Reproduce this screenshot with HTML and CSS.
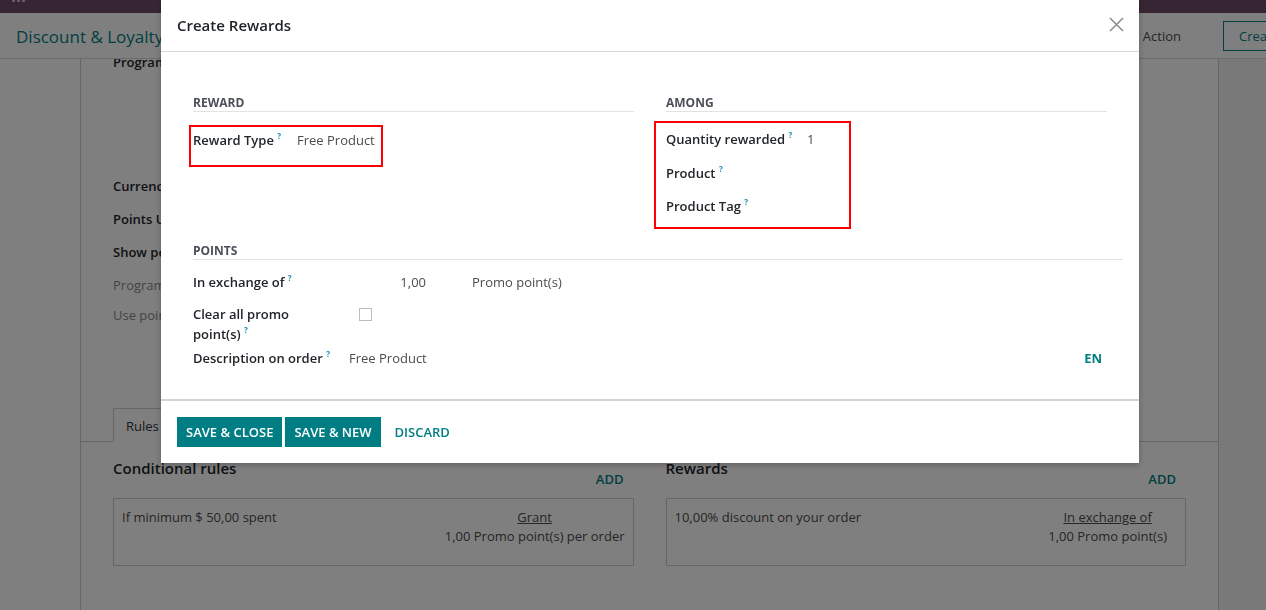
FILE: index.html
```html
<!DOCTYPE html>
<html lang="en">
<head>
  <meta charset="UTF-8" />
  <title>Discount &amp; Loyalty - Create Rewards</title>
  <link rel="stylesheet" href="styles.css">
</head>
<body>

  <!-- Page behind the dialog -->
  <div class="navbar">
    <span class="apps-dots"><i></i><i></i><i></i></span>
  </div>

  <div class="control-panel">
    <div class="breadcrumb">Discount &amp; Loyalty</div>
    <div class="cp-right">
      <span class="cp-action">Action</span>
      <button class="btn-create">Create</button>
    </div>
  </div>

  <div class="form-area">
    <div class="sheet">
      <div class="bg-row first strong">Program Name</div>
      <div class="bg-row spaced strong">Currency</div>
      <div class="bg-row strong">Points Unit</div>
      <div class="bg-row strong">Show points</div>
      <div class="bg-row muted">Program</div>
      <div class="bg-row muted">Use points on</div>

      <div class="tabs">
        <span class="tab active">Rules &amp; Rewards</span>
      </div>

      <div class="lists">
        <div class="list-col">
          <div class="list-head">
            <h3>Conditional rules</h3>
            <span class="link-add">ADD</span>
          </div>
          <div class="card">
            <span>If minimum $ 50,00 spent</span>
            <div class="card-right">
              <u>Grant</u>
              <span>1,00 Promo point(s) per order</span>
            </div>
          </div>
        </div>
        <div class="list-col">
          <div class="list-head">
            <h3>Rewards</h3>
            <span class="link-add">ADD</span>
          </div>
          <div class="card card-rewards">
            <span>10,00% discount on your order</span>
            <div class="card-right">
              <u>In exchange of</u>
              <span>1,00 Promo point(s)</span>
            </div>
          </div>
        </div>
      </div>
    </div>
    <div class="side"></div>
  </div>

  <!-- Dialog -->
  <div class="backdrop">
    <div class="modal">
      <div class="modal-header">
        <h4>Create Rewards</h4>
        <svg class="close" width="15" height="15" viewBox="0 0 15 15">
          <path d="M1 1L14 14M14 1L1 14" stroke="#8a8a8a" stroke-width="1.5" fill="none"/>
        </svg>
      </div>

      <div class="modal-body">
        <div class="groups">
          <div class="group reward-group">
            <div class="group-title">Reward</div>
            <div class="field">
              <label>Reward Type <sup>?</sup></label>
              <span class="value">Free Product</span>
            </div>
            <div class="mark mark-reward"></div>
          </div>

          <div class="group among-group">
            <div class="group-title">Among</div>
            <div class="field">
              <label>Quantity rewarded <sup>?</sup></label>
              <span class="value">1</span>
            </div>
            <div class="field">
              <label>Product <sup>?</sup></label>
              <span class="value"></span>
            </div>
            <div class="field">
              <label>Product Tag <sup>?</sup></label>
              <span class="value"></span>
            </div>
            <div class="mark mark-among"></div>
          </div>
        </div>

        <div class="points">
          <div class="group-title">Points</div>
          <div class="field row-exchange">
            <label>In exchange of <sup>?</sup></label>
            <div class="value exchange">
              <span class="num">1,00</span>
              <span class="unit">Promo point(s)</span>
            </div>
          </div>
          <div class="field row-clear">
            <label>Clear all promo point(s) <sup>?</sup></label>
            <div class="value"><span class="checkbox"></span></div>
          </div>
          <div class="field row-desc">
            <label>Description on order <sup>?</sup></label>
            <div class="value desc">
              <span>Free Product</span>
              <span class="lang">EN</span>
            </div>
          </div>
        </div>
      </div>

      <div class="modal-footer">
        <button class="btn-primary">Save &amp; Close</button>
        <button class="btn-primary">Save &amp; New</button>
        <button class="btn-link">Discard</button>
      </div>
    </div>
  </div>

</body>
</html>
```

FILE: styles.css
```css
body {
  margin: 0;
  font-family: "Open Sans", "Noto Sans", sans-serif;
  font-size: 13px;
  color: #212529;
  background-color: #fff;
  height: 610px;
  overflow: hidden;
}
/* Page behind */
.navbar {
  height: 13px;
  background-color: #714b67;
  position: relative;
}
.apps-dots {
  display: flex;
  gap: 2px;
  padding-left: 12px;
}
.apps-dots i {
  width: 3px;
  height: 2px;
  background-color: #c9b8c5;
}
.control-panel {
  height: 46px;
  border-bottom: 1px solid #d8d8d8;
  display: flex;
  align-items: center;
  justify-content: space-between;
  box-sizing: border-box;
  padding-left: 16px;
  overflow: hidden;
}
.breadcrumb {
  font-size: 17px;
  color: #017e84;
  margin-top: 1px;
  white-space: nowrap;
}
.cp-right {
  display: flex;
  align-items: center;
  gap: 42px;
  margin-right: -29px;
}
.cp-action {
  font-size: 13px;
  color: #4c4c4c;
}
.btn-create {
  font-family: inherit;
  font-size: 13px;
  color: #017e84;
  background: #fff;
  border: 1px solid #017e84;
  height: 30px;
  width: 72px;
  padding: 0;
}
.form-area {
  display: flex;
  height: 551px;
  overflow: hidden;
}
.sheet {
  margin-left: 80px;
  width: 1139px;
  border-left: 1px solid #ccc;
  border-right: 1px solid #ccc;
  box-sizing: border-box;
}
.side {
  flex: 1;
  background-color: #f3f3f3;
}
.bg-row {
  padding-left: 32px;
  line-height: 20px;
  height: 20px;
  margin-bottom: 13px;
  white-space: nowrap;
}
.bg-row.first {
  margin-top: -7px;
}
.bg-row.spaced {
  margin-top: 104px;
}
.bg-row.strong {
  font-weight: 600;
}
.bg-row.muted {
  color: #888;
  margin-bottom: 10px;
}
.tabs {
  margin-top: 83px;
  border-bottom: 1px solid #ccc;
  padding-left: 32px;
  height: 33px;
}
.tab {
  display: inline-block;
  height: 34px;
  line-height: 34px;
  padding: 0 12px;
  border: 1px solid #ccc;
  border-bottom-color: #fff;
  box-sizing: border-box;
  background: #fff;
  color: #333;
}
.lists {
  display: flex;
  gap: 32px;
  padding: 16px 32px 0;
}
.list-col {
  width: 521px;
}
.list-head {
  display: flex;
  justify-content: space-between;
  height: 40px;
}
.list-head h3 {
  margin: 0;
  font-size: 15px;
  font-weight: 600;
  line-height: 20px;
}
.link-add {
  font-weight: 600;
  color: #017e84;
  margin-top: 12px;
  margin-right: 10px;
}
.card {
  border: 1px solid #ccc;
  height: 68px;
  box-sizing: border-box;
  padding: 8px 8px;
  display: flex;
  justify-content: space-between;
  color: #4c4c4c;
  line-height: 20px;
}
.card-rewards {
  padding-right: 18px;
}
.card-right {
  display: flex;
  flex-direction: column;
  align-items: center;
}
.card-right span {
  margin-top: -1px;
}
/* Dialog */
.backdrop {
  position: fixed;
  inset: 0;
  background-color: rgba(0, 0, 0, 0.5);
}
.modal {
  margin-left: 161px;
  width: 978px;
  height: 463px;
  background-color: #fff;
  display: flex;
  flex-direction: column;
  box-shadow: 0 2px 6px rgba(0, 0, 0, 0.25);
}
.modal-header {
  height: 52px;
  border-bottom: 1px solid #d8d8d8;
  box-sizing: border-box;
  display: flex;
  align-items: center;
  justify-content: space-between;
  padding: 0 15px 2px 16px;
}
.modal-header h4 {
  margin: 0;
  font-size: 15px;
  font-weight: 600;
  color: #212529;
}
.modal-body {
  flex: 1;
  padding: 43px 16px 0 32px;
}
.groups {
  display: flex;
}
.group {
  position: relative;
  box-sizing: border-box;
}
.reward-group {
  width: 473px;
  padding-right: 32px;
}
.among-group {
  width: 457px;
  padding-right: 16px;
}
.group-title {
  font-size: 12px;
  font-weight: 700;
  text-transform: uppercase;
  color: #4a4f59;
  line-height: 16px;
  border-bottom: 1px solid #e2e2e2;
}
.field {
  display: flex;
  line-height: 20px;
  min-height: 20px;
}
.field label {
  font-weight: 600;
  color: #212529;
  box-sizing: border-box;
  padding-right: 16px;
  flex-shrink: 0;
}
.field .value {
  color: #4c4c4c;
  flex: 1;
}
.group .field label {
  white-space: nowrap;
}
sup {
  color: #1d8fb0;
  font-size: 8px;
  font-weight: 700;
  vertical-align: top;
  position: relative;
  top: -4px;
}
.reward-group .field {
  margin-top: 18px;
}
.reward-group .field label {
  width: 104px;
}
.among-group .field {
  margin-top: 13.5px;
}
.among-group .field:nth-child(2) {
  margin-top: 17px;
}
.among-group .field label {
  width: 141px;
}
/* Red annotation boxes drawn over the fields */
.mark {
  position: absolute;
  border: 2px solid #f00;
  box-sizing: border-box;
}
.mark-reward {
  top: 30px;
  left: -4px;
  width: 194px;
  height: 42px;
}
.mark-among {
  top: 26px;
  left: -12px;
  width: 197px;
  height: 108px;
}
.points {
  margin-top: 27px;
}
.points .field label {
  width: 156px;
}
.row-exchange {
  margin-top: 12px;
}
.exchange {
  display: flex;
}
.exchange .num {
  width: 77px;
  text-align: right;
}
.exchange .unit {
  margin-left: 46px;
}
.row-clear {
  margin-top: 12px;
}
.checkbox {
  display: inline-block;
  width: 13px;
  height: 13px;
  border: 1px solid #bdbdbd;
  box-sizing: border-box;
  margin: 4px 0 0 10px;
}
.row-desc {
  margin-top: 4px;
}
.desc {
  display: flex;
  justify-content: space-between;
  padding-right: 21px;
}
.lang {
  font-weight: 700;
  color: #017e84;
}
.modal-footer {
  border-top: 2px solid #d3d4d8;
  padding: 16px;
  display: flex;
  gap: 3px;
}
.modal-footer button {
  font-family: inherit;
  font-size: 13px;
  font-weight: 600;
  text-transform: uppercase;
  height: 30px;
  border: none;
  padding: 0 9px;
  cursor: pointer;
}
.btn-primary {
  background-color: #017e84;
  color: #fff;
}
.btn-link {
  background: none;
  color: #017e84;
  margin-left: 2px;
}
```
